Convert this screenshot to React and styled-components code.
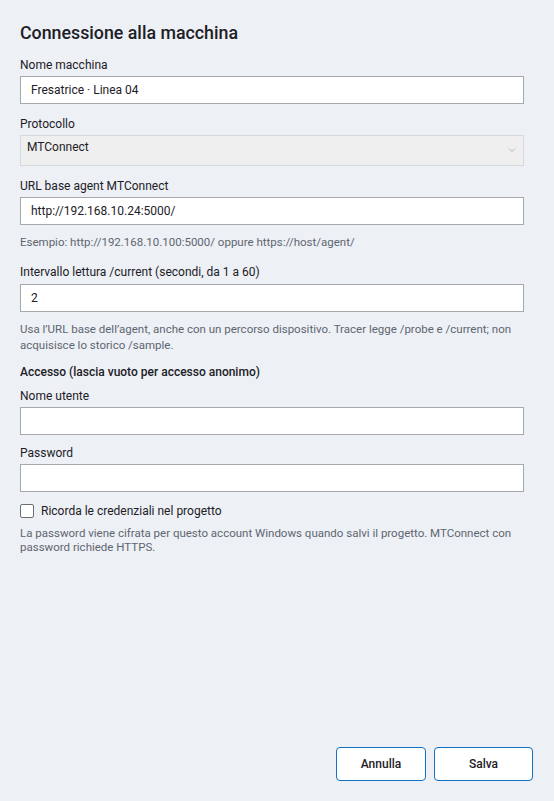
import React from "react"
import styled, { createGlobalStyle } from "styled-components"

const GlobalStyle = createGlobalStyle`
  html, body {
    margin: 0;
    padding: 0;
    background: #edf0f5;
  }
  body {
    font-family: Roboto, "Noto Sans", "Liberation Sans", sans-serif;
    color: #1c2026;
  }
  * {
    box-sizing: border-box;
  }
`

const Page = styled.div`
  display: flex;
  flex-direction: column;
  height: 801px;
  padding: 21px 30px 20px 20px;
`

const Title = styled.h1`
  margin: 0 0 12px 0;
  font-size: 17.8px;
  line-height: 24px;
  font-weight: 500;
  color: #1c2026;
`

const Field = styled.div`
  display: flex;
  flex-direction: column;
  margin-bottom: ${props => props.gap || 12}px;
`

const Label = styled.label`
  font-size: 12px;
  line-height: 16px;
  margin-bottom: ${props => props.gap || 3}px;
  color: #1c2026;
  font-weight: ${props => (props.bold ? 500 : 400)};
`

const Input = styled.input`
  width: 100%;
  height: 28px;
  border: 1px solid #a5a8ad;
  border-radius: 0;
  background: #fff;
  padding: 0 10px;
  font-family: inherit;
  font-size: 12px;
  color: #1c2026;
  outline: none;
`

const Select = styled.div`
  display: flex;
  justify-content: space-between;
  align-items: flex-start;
  height: 31px;
  border: 1px solid #d6d8db;
  background: #efefef;
  padding: 3px 7px 0 6px;
  font-size: 12px;
  line-height: 16px;
  color: #1c2026;
`

const Chevron = styled.svg`
  width: 8px;
  height: 6px;
  margin-top: 8px;
`

const Help = styled.div`
  font-size: 11.5px;
  line-height: ${props => props.lh || 16}px;
  color: #5d6671;
  margin-bottom: ${props => props.gap || 12}px;
`

const CheckRow = styled.label`
  display: flex;
  align-items: center;
  gap: 7px;
  font-size: 12px;
  line-height: 16px;
  margin-bottom: 7px;
`

const Box = styled.span`
  width: 14px;
  height: 14px;
  border: 1px solid #6b6f75;
  border-radius: 2px;
  background: #fff;
`

const Footer = styled.div`
  margin-top: auto;
  margin-right: -9px;
  display: flex;
  justify-content: flex-end;
  gap: 8px;
`

const Button = styled.button`
  width: ${props => props.w}px;
  height: 34px;
  background: #fff;
  border: 1px solid #1170c0;
  border-radius: 4px;
  font-family: inherit;
  font-size: 12px;
  font-weight: 500;
  color: #1c2026;
`

const App = () => (
  <Page>
    <GlobalStyle />
    <Title>Connessione alla macchina</Title>

    <Field>
      <Label>Nome macchina</Label>
      <Input defaultValue="Fresatrice · Linea 04" />
    </Field>

    <Field>
      <Label>Protocollo</Label>
      <Select>
        <span>MTConnect</span>
        <Chevron viewBox="0 0 8 6">
          <path d="M1 1.5 L4 4.5 L7 1.5" fill="none" stroke="#b4b6b9" strokeWidth="1" />
        </Chevron>
      </Select>
    </Field>

    <Field gap={9}>
      <Label>URL base agent MTConnect</Label>
      <Input defaultValue="http://192.168.10.24:5000/" />
    </Field>
    <Help gap={14}>Esempio: http://192.168.10.100:5000/ oppure https://host/agent/</Help>

    <Field gap={9}>
      <Label gap={4}>Intervallo lettura /current (secondi, da 1 a 60)</Label>
      <Input defaultValue="2" />
    </Field>
    <Help gap={11}>
      Usa l’URL base dell’agent, anche con un percorso dispositivo. Tracer legge /probe e /current; non
      acquisisce lo storico /sample.
    </Help>

    <Label bold gap={8}>Accesso (lascia vuoto per accesso anonimo)</Label>

    <Field gap={10}>
      <Label>Nome utente</Label>
      <Input />
    </Field>

    <Field gap={11}>
      <Label>Password</Label>
      <Input type="password" />
    </Field>

    <CheckRow>
      <Box />
      Ricorda le credenziali nel progetto
    </CheckRow>
    <Help lh={14}>
      La password viene cifrata per questo account Windows quando salvi il progetto. MTConnect con
      password richiede HTTPS.
    </Help>

    <Footer>
      <Button w={90}>Annulla</Button>
      <Button w={99}>Salva</Button>
    </Footer>
  </Page>
)

export default App
